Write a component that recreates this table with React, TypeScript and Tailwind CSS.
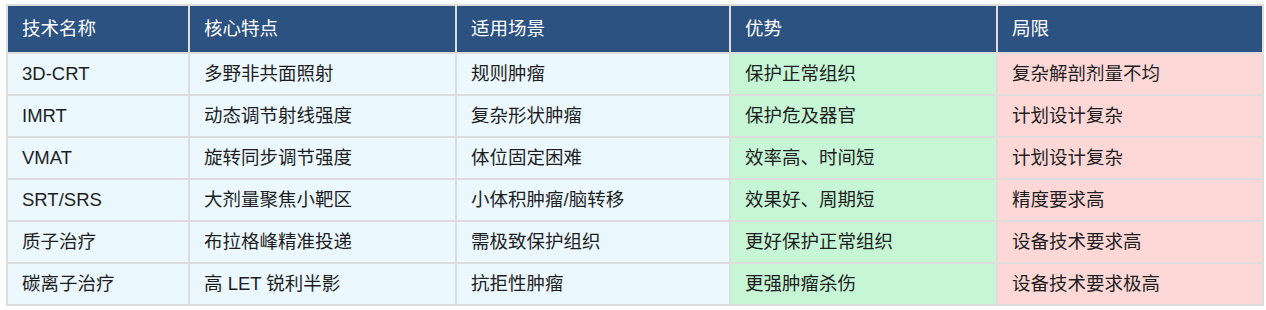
import React from "react";

const headers = ["技术名称", "核心特点", "适用场景", "优势", "局限"];
const rows = [
  ["3D-CRT", "多野非共面照射", "规则肿瘤", "保护正常组织", "复杂解剖剂量不均"],
  ["IMRT", "动态调节射线强度", "复杂形状肿瘤", "保护危及器官", "计划设计复杂"],
  ["VMAT", "旋转同步调节强度", "体位固定困难", "效率高、时间短", "计划设计复杂"],
  ["SRT/SRS", "大剂量聚焦小靶区", "小体积肿瘤/脑转移", "效果好、周期短", "精度要求高"],
  ["质子治疗", "布拉格峰精准投递", "需极致保护组织", "更好保护正常组织", "设备技术要求高"],
  ["碳离子治疗", "高 LET 锐利半影", "抗拒性肿瘤", "更强肿瘤杀伤", "设备技术要求极高"],
];

const bgFor = (i: number) =>
  i === 3 ? "bg-[#c6f6d5]" : i === 4 ? "bg-[#fed7d7]" : "bg-[#ebf8ff]";

export default function App() {
  return (
    <div
      className="w-[1266px] h-[310px] bg-white pt-[4px] pl-[6px]"
      style={{ fontFamily: '"Liberation Sans", "Noto Sans CJK SC", sans-serif' }}
    >
      <div className="inline-grid grid-cols-[180px_265px_272px_265px_264px] gap-[2px] p-[2px] bg-[#dddddd]">
        {headers.map((h) => (
          <div
            key={h}
            className="h-[46px] flex items-center pl-[14px] bg-[#2c5282] text-white text-[18.5px]"
          >
            {h}
          </div>
        ))}
        {rows.map((r, ri) =>
          r.map((c, ci) => (
            <div
              key={ri + "-" + ci}
              className={`h-[40px] flex items-center pl-[14px] text-[18.5px] text-[#1e1e1e] ${bgFor(ci)}`}
            >
              {c}
            </div>
          ))
        )}
      </div>
    </div>
  );
}
